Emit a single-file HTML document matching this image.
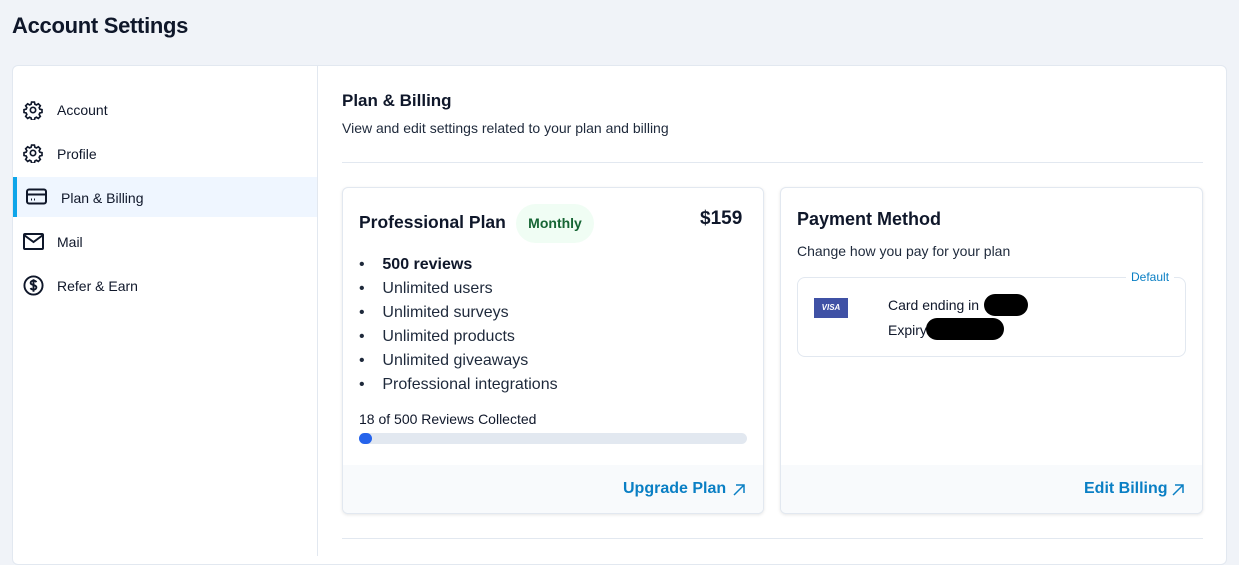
<!DOCTYPE html>
<html><head><style>
*{margin:0;padding:0;box-sizing:border-box}
body{width:1239px;height:547px;overflow:hidden;background:#f0f3f8;font-family:"Liberation Sans",sans-serif;color:#0f172a;position:relative}
.a{position:absolute;white-space:nowrap}
.t{font-weight:600}
</style></head><body>
<div class="a t" style="left:12px;top:13px;font-size:22px;letter-spacing:-0.3px">Account Settings</div>
<div class="a" style="left:12px;top:65px;width:1215px;height:500px;background:#fff;border:1px solid #e2e8f0;border-radius:6px"></div>
<div class="a" style="left:317px;top:66px;width:1px;height:490px;background:#e2e8f0"></div>
<!-- sidebar -->
<div class="a" style="left:13px;top:177px;width:304px;height:40px;background:#eff6ff"></div>
<div class="a" style="left:13px;top:177px;width:4px;height:40px;background:#0ea5e9"></div>
<svg class="a" style="left:23px;top:100px" width="20" height="20" viewBox="0 0 24 24" fill="none" stroke="#0f172a" stroke-width="2"><path d="M10.3 2.5h3.4l.6 2.6 1.8.8 2.3-1.4 2.4 2.4-1.4 2.3.8 1.8 2.6.6v3.4l-2.6.6-.8 1.8 1.4 2.3-2.4 2.4-2.3-1.4-1.8.8-.6 2.6h-3.4l-.6-2.6-1.8-.8-2.3 1.4-2.4-2.4 1.4-2.3-.8-1.8-2.6-.6v-3.4l2.6-.6.8-1.8-1.4-2.3 2.4-2.4 2.3 1.4 1.8-.8z"/><circle cx="12" cy="12" r="3.2"/></svg>
<svg class="a" style="left:23px;top:143px" width="20" height="20" viewBox="0 0 24 24" fill="none" stroke="#0f172a" stroke-width="2"><path d="M10.3 2.5h3.4l.6 2.6 1.8.8 2.3-1.4 2.4 2.4-1.4 2.3.8 1.8 2.6.6v3.4l-2.6.6-.8 1.8 1.4 2.3-2.4 2.4-2.3-1.4-1.8.8-.6 2.6h-3.4l-.6-2.6-1.8-.8-2.3 1.4-2.4-2.4 1.4-2.3-.8-1.8-2.6-.6v-3.4l2.6-.6.8-1.8-1.4-2.3 2.4-2.4 2.3 1.4 1.8-.8z"/><circle cx="12" cy="12" r="3.2"/></svg>
<svg class="a" style="left:26px;top:188px" width="21" height="18" viewBox="0 0 21 18" fill="none" stroke="#0f172a" stroke-width="2"><rect x="1" y="1.5" width="19" height="14" rx="2"/><path d="M1 6.5h19"/><path d="M5 11.5h1M8 11.5h1"/></svg>
<svg class="a" style="left:23px;top:233px" width="21" height="17" viewBox="0 0 21 17" fill="none" stroke="#0f172a" stroke-width="2"><rect x="1" y="1" width="19" height="15" rx="1"/><path d="M1 2l9.5 7L20 2"/></svg>
<svg class="a" style="left:23px;top:275px" width="21" height="21" viewBox="0 0 22 22" fill="none" stroke="#0f172a" stroke-width="2"><circle cx="11" cy="11" r="9.5"/><path d="M14 7.5c-.5-1-1.6-1.5-3-1.5-1.7 0-3 .9-3 2.3 0 3 6 1.5 6 4.6 0 1.4-1.3 2.4-3 2.4-1.5 0-2.6-.6-3.1-1.6M11 4.5v13"/></svg>
<div class="a" style="left:57px;top:102px;font-size:14px">Account</div>
<div class="a" style="left:57px;top:146px;font-size:14px">Profile</div>
<div class="a" style="left:61px;top:190px;font-size:14px">Plan &amp; Billing</div>
<div class="a" style="left:57px;top:234px;font-size:14px">Mail</div>
<div class="a" style="left:57px;top:278px;font-size:14px">Refer &amp; Earn</div>
<!-- main -->
<div class="a t" style="left:342px;top:91px;font-size:17px">Plan &amp; Billing</div>
<div class="a" style="left:342px;top:120px;font-size:14px;color:#1e293b">View and edit settings related to your plan and billing</div>
<div class="a" style="left:342px;top:162px;width:861px;height:1px;background:#e2e8f0"></div>
<div class="a" style="left:342px;top:538px;width:861px;height:1px;background:#e2e8f0"></div>
<!-- left card -->
<div class="a" style="left:342px;top:187px;width:422px;height:327px;background:#fff;border:1px solid #e2e8f0;border-radius:6px;box-shadow:0 1px 3px rgba(0,0,0,.1);overflow:hidden">
<div class="a" style="left:0;top:277px;width:422px;height:50px;background:#f8fafc"></div>
</div>
<div class="a t" style="left:359px;top:212px;font-size:17.5px">Professional Plan</div>
<div class="a" style="left:516px;top:204px;width:78px;height:39px;border-radius:20px;background:#f0fdf4;color:#166534;font-size:14px;font-weight:700;text-align:center;line-height:39px">Monthly</div>
<div class="a" style="left:700px;top:208px;font-size:19px;font-weight:700">$159</div>
<div class="a" style="left:359px;top:253px;font-size:16px;line-height:24px;color:#1e293b">
<div>•&nbsp;&nbsp;&nbsp; <b style="color:#0f172a">500 reviews</b></div>
<div>•&nbsp;&nbsp;&nbsp; Unlimited users</div>
<div>•&nbsp;&nbsp;&nbsp; Unlimited surveys</div>
<div>•&nbsp;&nbsp;&nbsp; Unlimited products</div>
<div>•&nbsp;&nbsp;&nbsp; Unlimited giveaways</div>
<div>•&nbsp;&nbsp;&nbsp; Professional integrations</div>
</div>
<div class="a" style="left:359px;top:411px;font-size:14px">18 of 500 Reviews Collected</div>
<div class="a" style="left:359px;top:433px;width:388px;height:11px;border-radius:6px;background:#e2e8f0"></div>
<div class="a" style="left:359px;top:433px;width:13px;height:11px;border-radius:6px;background:#2563eb"></div>
<div class="a" style="left:623px;top:480px;font-size:16px;font-weight:700;color:#0a7fc4">Upgrade Plan</div>
<svg class="a" style="left:732px;top:483px" width="14" height="14" viewBox="0 0 14 14" fill="none" stroke="#0a7fc4" stroke-width="1.5"><path d="M2 12L12 2M4 2h8v8"/></svg>
<!-- right card -->
<div class="a" style="left:780px;top:187px;width:423px;height:327px;background:#fff;border:1px solid #e2e8f0;border-radius:6px;box-shadow:0 1px 3px rgba(0,0,0,.1);overflow:hidden">
<div class="a" style="left:0;top:277px;width:423px;height:50px;background:#f8fafc"></div>
</div>
<div class="a t" style="left:797px;top:209px;font-size:18px">Payment Method</div>
<div class="a" style="left:797px;top:243px;font-size:14px;color:#1e293b">Change how you pay for your plan</div>
<div class="a" style="left:797px;top:277px;width:389px;height:80px;border:1px solid #e2e8f0;border-radius:8px"></div>
<div class="a" style="left:1126px;top:270px;padding:0 5px;background:#fff;font-size:12px;color:#0a7fc4">Default</div>
<div class="a" style="left:814px;top:298px;width:34px;height:20px;background:#3f51a5;color:#fff;font-size:8px;font-weight:700;font-style:italic;text-align:center;line-height:20px">VISA</div>
<div class="a" style="left:888px;top:297px;font-size:14px">Card ending in</div>
<div class="a" style="left:984px;top:294px;width:44px;height:22px;border-radius:11px;background:#000"></div>
<div class="a" style="left:888px;top:322px;font-size:14px">Expiry</div>
<div class="a" style="left:926px;top:318px;width:78px;height:22px;border-radius:11px;background:#000"></div>
<div class="a" style="left:1084px;top:480px;font-size:16px;font-weight:700;color:#0a7fc4">Edit Billing</div>
<svg class="a" style="left:1171px;top:483px" width="14" height="14" viewBox="0 0 14 14" fill="none" stroke="#0a7fc4" stroke-width="1.5"><path d="M2 12L12 2M4 2h8v8"/></svg>
</body></html>
